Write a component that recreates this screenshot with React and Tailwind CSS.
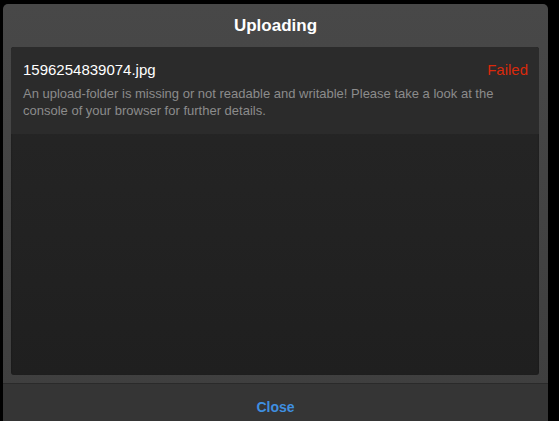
export default function App() {
  return (
    <div className="w-[559px] h-[421px] bg-black overflow-hidden" style={{ fontFamily: '"Liberation Sans", Arial, sans-serif' }}>
      <div className="ml-[3px] mt-[4px] w-[545px] h-[430px] rounded-t-[5px] bg-gradient-to-b from-[#484848] to-[#3e3e3e] flex flex-col">
        <div className="h-[43px] pt-[1px] flex items-center justify-center text-white font-bold text-[17px]">
          Uploading
        </div>
        <div className="mx-[8px] w-[528px] h-[328px] rounded-[3px] bg-gradient-to-b from-[#262626] to-[#1f1f1f] shadow-[inset_0_1px_2px_rgba(0,0,0,0.4)] overflow-hidden">
          <div className="bg-[#2b2b2b] px-[12px] pt-[14px] pb-[15px]">
            <div className="flex justify-between items-center text-[15px] leading-[18px]">
              <span className="text-white">1596254839074.jpg</span>
              <span className="text-[#d9290b] mr-[-1px]">Failed</span>
            </div>
            <div className="mt-[6px] text-[13px] leading-[17px] text-[#8c8c8c]">
              An upload-folder is missing or not readable and writable! Please take a look at the console of your browser for further details.
            </div>
          </div>
        </div>
        <div className="mt-[8px] h-px bg-[#2a2a2a]"></div>
        <div className="flex-1 bg-[#353535] pt-[15px] flex justify-center">
          <span className="text-[#3f8fe0] font-bold text-[14px] leading-[16px]">Close</span>
        </div>
      </div>
    </div>
  );
}
